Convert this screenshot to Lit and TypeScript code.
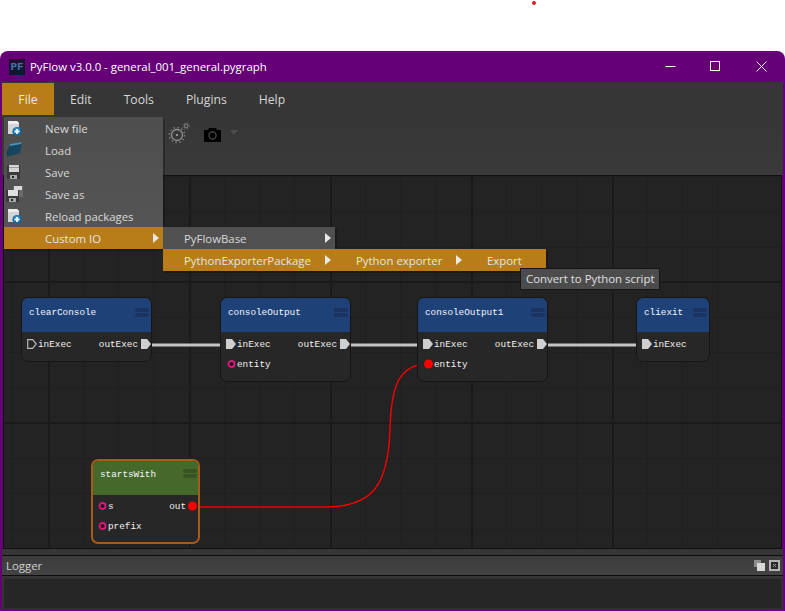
import { LitElement, html, css, svg } from "lit";
import { customElement } from "lit/decorators.js";

type Pin = { label: string; kind: "exec" | "execEmpty" | "data" | "dataOn"; y: number };
type Node = { name: string; x: number; y: number; w: number; h: number; green?: boolean; left: Pin[]; right: Pin[] };

const NODES: Node[] = [
  { name: "clearConsole", x: 21, y: 121, w: 131, h: 65, left: [{ label: "inExec", kind: "execEmpty", y: 36 }], right: [{ label: "outExec", kind: "exec", y: 36 }] },
  { name: "consoleOutput", x: 220, y: 121, w: 131, h: 85, left: [{ label: "inExec", kind: "exec", y: 36 }, { label: "entity", kind: "data", y: 56 }], right: [{ label: "outExec", kind: "exec", y: 36 }] },
  { name: "consoleOutput1", x: 417, y: 121, w: 131, h: 85, left: [{ label: "inExec", kind: "exec", y: 36 }, { label: "entity", kind: "dataOn", y: 56 }], right: [{ label: "outExec", kind: "exec", y: 36 }] },
  { name: "cliexit", x: 636, y: 121, w: 74, h: 65, left: [{ label: "inExec", kind: "exec", y: 36 }], right: [] },
  { name: "startsWith", x: 91, y: 283, w: 109, h: 85, green: true, left: [{ label: "s", kind: "data", y: 36 }, { label: "prefix", kind: "data", y: 56 }], right: [{ label: "out", kind: "dataOn", y: 36 }] },
];

const pageIcon = html`<svg width="18" height="16" viewBox="-2 -1 18 16"><path d="M0 0h9l2 2v11H0z" fill="#d4d4d4"/><path d="M0 0h9l2 2v1H0z" fill="#ececec"/><circle cx="9" cy="10.500" r="4.500" fill="#15689c"/><circle cx="9" cy="9.500" r="3" fill="#2f8fc6"/><path d="M8 8h2v1.500h1.500v2H10V13H8v-1.500H6.500v-2H8z" fill="#e8f4fa"/></svg>`;
const folderIcon = html`<svg width="16" height="16" viewBox="0 0 16 16"><path d="M4 2 16 0l-2 11-13 4z" fill="#14465f"/><path d="M4 2 16 0l-1 2L4 4z" fill="#4a93b5"/><path d="M1 15 3 5l1-3-3 8z" fill="#0d3043"/></svg>`;
const saveIcon = html`<svg width="16" height="16" viewBox="0 0 16 16"><path d="M2 1h12v14H1V2z" fill="#3a3a3a"/><rect x="3" y="1" width="10" height="7" fill="#d4d4d4"/><rect x="3" y="3" width="10" height="1" fill="#9c9c9c"/><rect x="4" y="11" width="7" height="4" fill="#a8a8a8"/><rect x="6" y="12" width="2" height="2" fill="#222"/></svg>`;
const saveAsIcon = html`<svg width="18" height="16" viewBox="0 0 18 16"><path d="M7 0h10v11H7z" fill="#6a6a6a"/><rect x="8" y="0" width="8" height="4" fill="#d8d8d8"/><path d="M1 4h12v12H0V5z" fill="#3a3a3a"/><rect x="2" y="4" width="10" height="6" fill="#e0e0e0"/><rect x="3" y="12" width="7" height="4" fill="#a8a8a8"/><rect x="5" y="13" width="2" height="2" fill="#222"/></svg>`;

const gearIcon = html`<svg width="26" height="24" viewBox="0 0 26 24" fill="none"><circle cx="9" cy="14" r="5.500" stroke="#949494" stroke-width="1.300"/><circle cx="9" cy="14" r="7.600" stroke="#7a7a7a" stroke-width="1.500" stroke-dasharray="1.600 2.400"/><circle cx="9" cy="14" r="1" fill="#b0b0b0"/><circle cx="18" cy="5" r="1.800" stroke="#7c7c7c" stroke-width="1.200"/><circle cx="18" cy="5" r="3.400" stroke="#626262" stroke-width="1.200" stroke-dasharray="1.200 1.600"/></svg>`;
const cameraIcon = html`<svg width="17" height="14" viewBox="0 0 17 14"><path d="M1 2h3l1-2h7l1 2h3a1 1 0 0 1 1 1v10a1 1 0 0 1-1 1H1a1 1 0 0 1-1-1V3a1 1 0 0 1 1-1z" fill="#000"/><circle cx="8.500" cy="7.500" r="3.600" fill="none" stroke="#4c4c4c" stroke-width="1.200"/></svg>`;

function grid() {
  const lines = [];
  for (let i = 1; i < 22; i++) {
    const x = Math.round(i * 35.25) - 22;
    const major = i % 4 === 2;
    lines.push(svg`<rect x=${x - 1} y="0" width=${major ? 2 : 1} height="373" fill=${major ? "#1a1a1a" : "#1f1f1f"}></rect>`);
  }
  for (let i = 0; i < 12; i++) {
    const major = i % 4 === 3;
    const y = Math.round(i * 35.25) - (major ? 1 : 0);
    lines.push(svg`<rect x="0" y=${y} width="785" height=${major ? 2 : 1} fill=${major ? "#1a1a1a" : "#1f1f1f"}></rect>`);
  }
  return lines;
}

@customElement("app-root")
export class AppRoot extends LitElement {
  static styles = css`
    :host { display: block; height: 611px; padding-top: 51px; box-sizing: border-box; background: #fff; position: relative; font-family: "Open Sans", "Noto Sans", sans-serif; overflow: hidden; }
    .dot { position: absolute; left: 532px; top: 1px; width: 4px; height: 4px; border-radius: 50%; background: #e02020; }
    .window { height: 560px; display: flex; flex-direction: column; background: #660077; border-radius: 8px 8px 0 0; padding: 0 2px 2px; box-sizing: border-box; position: relative; overflow: hidden; }
    .title { height: 31px; flex: none; display: flex; align-items: center; color: #fff; font-size: 11.400px; margin: 0 -2px; padding: 0 1px 0 9px; gap: 5px; }
    .logo { width: 16px; height: 16px; background: #0e1830; box-sizing: border-box; display: flex; align-items: center; justify-content: center; color: #4a6ea8; font: bold 11px "Liberation Mono", monospace; }
    .title-text { flex: 1; }
    .win-btns { display: flex; align-items: center; }
    .win-btn { width: 45.500px; height: 31px; display: flex; align-items: center; justify-content: center; }
    .menubar { height: 35px; flex: none; background: #363636; display: flex; align-items: flex-start; font-size: 12.200px; color: #d6d6d6; padding-top: 1px; box-sizing: border-box; }
    .menubar span { height: 32px; display: flex; align-items: center; padding: 0 16px; }
    .menubar .file { width: 52px; justify-content: center; padding: 0; background: #b87d18; color: #e8e8e8; }
    .toolbar { height: 58px; flex: none; background: linear-gradient(#363636, #3a3a3a); display: flex; align-items: flex-start; padding: 4px 0 0 166px; box-sizing: border-box; gap: 10px; }
    .tool-cam { margin-top: 4px; }
    .tool-arrow { margin: 9px 0 0 -1px; width: 0; height: 0; border: 4px solid transparent; border-top: 5px solid #4d4d4d; border-bottom: 0; }
    .canvas { height: 374px; flex: none; position: relative; background: #232323; border: 1px solid #111; margin: 0 1px 0 1px; overflow: hidden; box-sizing: border-box; }
    .layer { position: absolute; left: -4px; top: 0; width: 785px; height: 373px; }
    .nodes { position: absolute; left: -4px; top: 0; }
    .node { position: absolute; box-sizing: border-box; background: #272727; border: 1px solid #161616; border-radius: 7px; font: 9.340px/1 "Liberation Mono", monospace; color: #f2f2f2; }
    .node.green { border: 2px solid #a85a18; }
    .head { position: absolute; left: 0; right: 0; top: 0; height: 34px; background: #1e4178; border-radius: 6px 6px 0 0; }
    .green .head { background: #44692a; border-radius: 5px 5px 0 0; }
    .name { position: absolute; left: 7px; top: 10px; color: #f4f7fc; }
    .green .name { left: 7px; top: 9px; }
    .grip { position: absolute; right: 2px; top: 10px; width: 14px; display: flex; flex-direction: column; gap: 1px; }
    .green .grip { top: 8px; right: 1px; }
    .grip i { display: block; height: 4px; border-radius: 2px; background: #1a335f; }
    .green .grip i { background: #375522; }
    .pin-label { position: absolute; white-space: nowrap; margin-top: 1px; transform: translateY(-50%); }
    .pin-icon { position: absolute; transform: translateY(-50%); display: block; line-height: 0; }
    .menu { position: absolute; background: #505050; color: #d8d8d8; font-size: 11.400px; box-shadow: 2px 2px 0 rgba(0, 0, 0, 0.25); }
    .menu-file { left: 4px; top: 117px; width: 159px; height: 132px; background: linear-gradient(#4e4e4e, #565656); display: flex; flex-direction: column; box-sizing: border-box; }
    .item { height: 22px; flex: none; display: flex; align-items: center; position: relative; box-sizing: border-box; padding-left: 41px; }
    .item.on { background: #b87d18; color: #e4e4e4; }
    .ico { position: absolute; left: 2px; top: 3px; display: block; line-height: 0; }
    .arrow { position: absolute; width: 0; height: 0; top: 6px; border-left: 6px solid #e8e8e8; border-top: 5.500px solid transparent; border-bottom: 5.500px solid transparent; }
    .menu-sub { left: 163px; top: 227px; width: 172px; display: flex; flex-direction: column; }
    .item.sub { padding-left: 21px; }
    .strip { position: absolute; left: 335px; top: 249px; width: 211px; height: 22px; background: #b87d18; color: #e4e4e4; display: flex; font-size: 11.400px; align-items: center; box-shadow: 2px 2px 0 rgba(0, 0, 0, 0.25); }
    .strip-a { position: absolute; left: 21px; }
    .strip-b { position: absolute; left: 152px; }
    .tip { position: absolute; left: 520px; top: 268px; height: 22px; width: 140px; box-sizing: border-box; background: #4c4c4c; border: 1px solid #161616; color: #e0e0e0; font-size: 11.400px; display: flex; align-items: center; padding: 0 0 1px 5px; white-space: nowrap; }
    .gap { height: 6px; flex: none; background: #363636; }
    .log-head { height: 21px; flex: none; background: linear-gradient(#3c3c3c, #434343); border-top: 1px solid #0c0c0c; border-bottom: 1px solid #0c0c0c; display: flex; align-items: center; color: #cfcfcf; font-size: 11.400px; padding-left: 4px; box-sizing: border-box; justify-content: space-between; }
    .log-btns { display: flex; gap: 4px; padding-right: 3px; }
    .log-btn { width: 11px; height: 11px; display: block; }
    .log-body { flex: 1; background: #363636; padding: 2px 1px 0; display: flex; }
    .log-inner { flex: 1; background: #262626; border: 1px solid #303030; border-radius: 3px; }
  `;

  private pinIcon(kind: Pin["kind"]) {
    if (kind === "exec") return html`<svg width="10" height="10" viewBox="0 0 10 10"><path d="M0 0h6l4 5-4 5H0z" fill="#cfcfcf"/></svg>`;
    if (kind === "execEmpty") return html`<svg width="10" height="10" viewBox="0 0 10 10"><path d="M.7.7h5l3.500 4.300-3.500 4.300h-5z" fill="none" stroke="#b8b8b8" stroke-width="1.200"/></svg>`;
    if (kind === "dataOn") return html`<svg width="11" height="11" viewBox="0 0 11 11"><circle cx="5.500" cy="5.500" r="4.500" fill="#ff0000"/></svg>`;
    return html`<svg width="11" height="11" viewBox="0 0 11 11"><circle cx="5.500" cy="5.500" r="3" fill="#2a1020" stroke="#e0187c" stroke-width="1.800"/></svg>`;
  }

  private renderNode(n: Node) {
    const off = n.green ? 2 : 1;
    return html`<div class="node ${n.green ? "green" : ""}" style="left:${n.x}px;top:${n.y}px;width:${n.w}px;height:${n.h}px">
      <div class="head"></div>
      <div class="name">${n.name}</div>
      <div class="grip"><i></i><i></i></div>
      ${n.left.map((p) => html`
        <span class="pin-icon" style="left:${6 - off}px;top:${p.y - off + 11}px">${this.pinIcon(p.kind)}</span>
        <span class="pin-label" style="left:${17 - off}px;top:${p.y - off + 11}px">${p.label}</span>`)}
      ${n.right.map((p) => html`
        <span class="pin-icon" style="right:0;top:${p.y - off + 11}px">${this.pinIcon(p.kind)}</span>
        <span class="pin-label" style="right:${14 - off}px;top:${p.y - off + 11}px">${p.label}</span>`)}
    </div>`;
  }

  render() {
    return html`
      <div class="dot"></div>
      <div class="window">
        <div class="title">
          <div class="logo">PF</div>
          <div class="title-text">PyFlow v3.0.0 - general_001_general.pygraph</div>
          <div class="win-btns">
            <div class="win-btn"><svg width="11" height="11" viewBox="0 0 11 11"><path d="M0.500 5.500h10" stroke="#fff" stroke-width="1"/></svg></div>
            <div class="win-btn"><svg width="11" height="11" viewBox="0 0 11 11"><rect x=".5" y=".5" width="9" height="9" fill="none" stroke="#fff"/></svg></div>
            <div class="win-btn"><svg width="11" height="11" viewBox="0 0 11 11"><path d="M.5.5l10 10M10.500.5l-10 10" stroke="#fff" stroke-width="1"/></svg></div>
          </div>
        </div>
        <div class="menubar">
          <span class="file">File</span><span>Edit</span><span>Tools</span><span>Plugins</span><span>Help</span>
        </div>
        <div class="toolbar">
          <span class="tool-gear">${gearIcon}</span>
          <span class="tool-cam">${cameraIcon}</span>
          <span class="tool-arrow"></span>
        </div>
        <div class="canvas">
          <svg class="layer" viewBox="0 0 785 373">
            ${grid()}
            <g stroke="#c4c4c4" stroke-width="3" fill="none">
              <path d="M151 169H221"/><path d="M350 169H418"/><path d="M547 169H637"/>
            </g>
            <path d="M192 331 H325 C372 331 388 310 390 254 C391 212 398 188 428 188" stroke="#ee0000" stroke-width="1.500" fill="none"/>
          </svg>
          <div class="nodes">${NODES.map((n) => this.renderNode(n))}</div>
        </div>
        <div class="gap"></div>
        <div class="log-head">
          <span>Logger</span>
          <span class="log-btns">
            <svg class="log-btn" viewBox="0 0 11 11"><rect x="0" y="0" width="7" height="7" fill="#8c8c8c"/><rect x="3" y="3" width="8" height="8" fill="#d8d8d8"/></svg>
            <svg class="log-btn" viewBox="0 0 11 11"><rect width="11" height="11" fill="#b4b4b4"/><rect x="2" y="2" width="7" height="7" fill="#2a2a2a"/><path d="M4 4l3 3M7 4l-3 3" stroke="#9a9a9a" stroke-width="1"/></svg>
          </span>
        </div>
        <div class="log-body"><div class="log-inner"></div></div>
      </div>
      <div class="menu menu-file">
        <div class="item"><span class="ico">${pageIcon}</span>New file</div>
        <div class="item"><span class="ico">${folderIcon}</span>Load</div>
        <div class="item"><span class="ico">${saveIcon}</span>Save</div>
        <div class="item"><span class="ico">${saveAsIcon}</span>Save as</div>
        <div class="item"><span class="ico">${pageIcon}</span>Reload packages</div>
        <div class="item on">Custom IO<span class="arrow" style="left:149px"></span></div>
      </div>
      <div class="menu menu-sub">
        <div class="item sub">PyFlowBase<span class="arrow" style="left:162px"></span></div>
        <div class="item sub on">PythonExporterPackage<span class="arrow" style="left:162px"></span></div>
      </div>
      <div class="strip">
        <span class="strip-a">Python exporter</span><span class="arrow" style="left:121px"></span><span class="strip-b">Export</span>
      </div>
      <div class="tip">Convert to Python script</div>
    `;
  }
}
